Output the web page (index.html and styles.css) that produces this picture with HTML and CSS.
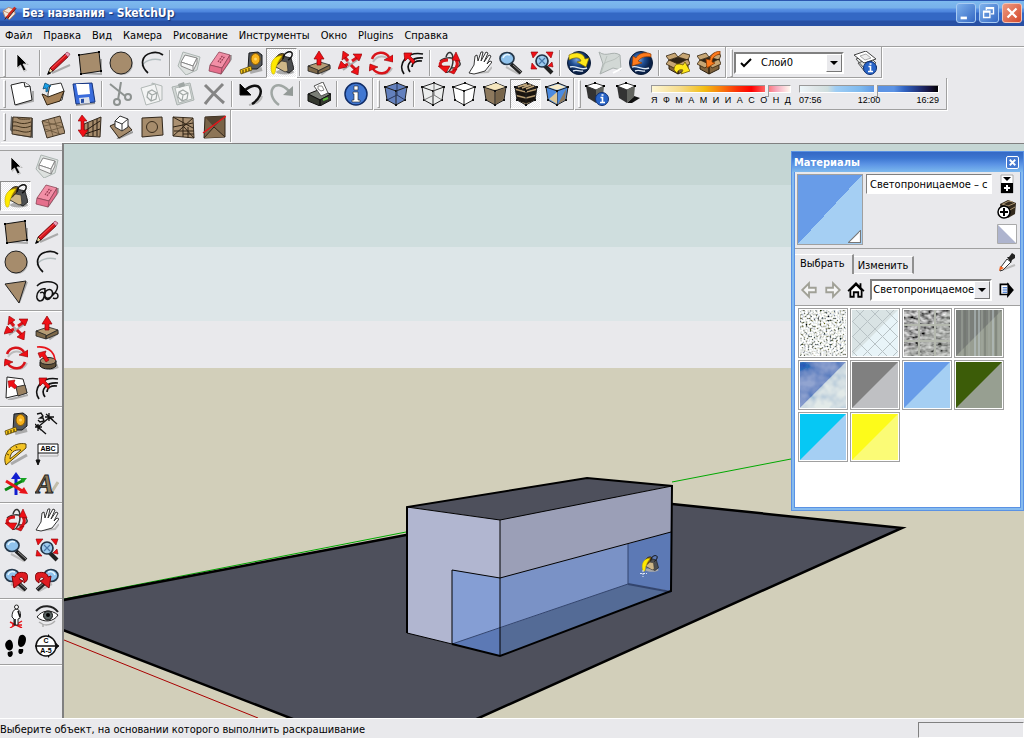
FILE: index.html
```html
<!DOCTYPE html>
<html lang="ru">
<head>
    <meta charset="UTF-8">
    <meta name="viewport" content="width=device-width, initial-scale=1.0">
    <title>Без названия - SketchUp</title>
    <link rel="stylesheet" href="styles.css">
</head>
<body>

    <!-- Icon set -->
    <svg class="sprite" aria-hidden="true">
        <defs>
            <radialGradient id="globeFill" cx="40%" cy="35%"><stop offset="0" stop-color="#7fa6d8"/><stop offset=".5" stop-color="#1f4e94"/><stop offset="1" stop-color="#0a2148"/></radialGradient>
            <pattern id="wood" width="24" height="6" patternUnits="userSpaceOnUse"><rect width="24" height="6" fill="#19140f"/><path d="M0 1l12 3L24 1" stroke="#b59b70" stroke-width="1.600" fill="none"/></pattern>
            <filter id="granite" x="0" y="0" width="1" height="1"><feTurbulence type="fractalNoise" baseFrequency=".5" numOctaves="2" seed="4"/><feColorMatrix values="3 .3 0 0 -.85  3 .2 0 0 -.78  3 0 .3 0 -.85  0 0 0 0 1"/></filter>
            <filter id="clouds" x="0" y="0" width="1" height="1"><feTurbulence type="fractalNoise" baseFrequency=".06" numOctaves="3" seed="9"/><feColorMatrix values="2.4 0 0 0 -.7  1.9 0 0 0 -.35  1 0 0 0 .3  0 0 0 0 1"/></filter>
            <filter id="stone" x="0" y="0" width="1" height="1"><feTurbulence type="fractalNoise" baseFrequency=".18 .3" numOctaves="2" seed="2"/><feColorMatrix values="1.3 0 0 0 -.28  1.3 0 0 0 -.28  1.3 0 0 0 -.28  0 0 0 0 1"/></filter>
        </defs>

        <symbol id="select" viewBox="0 0 24 24"><path d="M8 4v14l3-3 3 6 3-1.500-3-5.500h5z" fill="#bbb"/><path d="M7 3v14l3.500-3 3 6 2.500-1.200-3-5.800h4z" fill="#000" stroke="#fff" stroke-width=".7"/></symbol>
        <symbol id="pencil" viewBox="0 0 24 24"><path d="M5 22l18-8" stroke="#aaa" stroke-width="2"/><path d="M1 23l2-6 3 3z" fill="#f0d49a" stroke="#222" stroke-width=".8"/><path d="M3 17L18 3l3 3L6 20z" fill="#d4141c" stroke="#5a0508" stroke-width=".8"/><path d="M4.500 17.500L19 4" stroke="#ff5050" stroke-width="1"/><path d="M18 3l2-2 3 2-2 3z" fill="#f09ab4" stroke="#8c3c54" stroke-width=".7"/><path d="M0 24l1.500-4L4 22.500z"/></symbol>
        <symbol id="square" viewBox="0 0 24 24"><path d="M5 22l18 1V8" stroke="#aaa" stroke-width="2" fill="none"/><path d="M1 4l20-3 2 19-20 3z" fill="#a68c6c" stroke="#111" stroke-width="1"/><path d="M0 3h2v2H0zM20 0h2v2h-2zM22 19h2v2h-2zM2 22h2v2H2z"/></symbol>
        <symbol id="circle" viewBox="0 0 24 24"><circle cx="13" cy="13" r="11" fill="#b5b5b5"/><circle cx="12" cy="12" r="11" fill="#a68c6c" stroke="#222"/></symbol>
        <symbol id="arc" viewBox="0 0 24 24"><path d="M2 15C4 10 12 7 21 9" stroke="#b4bec0" stroke-width="1.500" fill="none"/><path d="M8 22C-1 14 2 4 11 2c4-1 8-1 12 2" stroke="#111" stroke-width="1.700" fill="none"/></symbol>
        <symbol id="polygon" viewBox="0 0 24 24"><path d="M23 2l-8 21" stroke="#aaa" stroke-width="2"/><path d="M1 4l21-3-7 22z" fill="#a68c6c" stroke="#222"/></symbol>
        <symbol id="freehand" viewBox="0 0 24 24"><path d="M2 6C6 1 18 0 22 5c2 4-2 8-5 11-4 4-8 2-7-2 0-4 5-6 7-3 2 4-3 10-6 8-2-2-1-7-1-11M10 9C5 8 1 13 2 18c1 4 6 4 7-1 1-4-1-6-4-4M17 14c3-2 6-1 6 2s-3 3-5 2" stroke="#111" stroke-width="1.500" fill="none"/></symbol>
        <symbol id="component" viewBox="0 0 24 24"><path d="M6 1L23 6l-3 13-11 5L1 15z" fill="#dde1df" stroke="#acb5b2"/><path d="M8 4l12 3-4 8-12-4z" fill="#fff" stroke="#888"/><path d="M4 11v4l12 5v-5zM16 15l4-8v5l-4 8" fill="#f6f6f6" stroke="#888"/></symbol>
        <symbol id="eraser" viewBox="0 0 24 24"><path d="M12 23l11-16v-3" stroke="#aaa" stroke-width="3" fill="none"/><path d="M11 1l11 3-8 13-12-3z" fill="#f28fa6" stroke="#8c4456" stroke-width=".8"/><path d="M2 14l12 3-1 6L1 20zM14 17l8-13v6l-9 13" fill="#e56f8c" stroke="#8c4456" stroke-width=".8"/><path d="M10 11l5-7M12 12l5-7" stroke="#973c52" stroke-width="1.200" stroke-dasharray="2 .8"/></symbol>
        <symbol id="tape" viewBox="0 0 24 24"><path d="M11 21l12-3" stroke="#aaa" stroke-width="4"/><path d="M10 2l9-1 4 3v10l-5 4H9z" fill="#55585c" stroke="#17191b"/><ellipse cx="16.500" cy="8" rx="4.500" ry="5.500" fill="#f7b21c" stroke="#8a5a00"/><circle cx="16.500" cy="8" r="1.500" fill="#ffd76a"/><path d="M12 15L1 19l1 4 11-4z" fill="#f5c417" stroke="#59450b" stroke-width=".8"/><path d="M4 19v3M7 18v3M10 17v3" stroke="#332800"/></symbol>
        <symbol id="bucket" viewBox="0 0 24 24"><ellipse cx="15" cy="21" rx="9" ry="2.500" fill="#aaa"/><path d="M9 4l12 3 3 11-5 4-13-6z" fill="#4c4e50" stroke="#111" stroke-width=".8"/><path d="M7 9l10 2 1 9-3 1-9-5z" fill="#cdb687" stroke="#333" stroke-width=".8"/><path d="M4 13C4 6 10 1 14 3c2 2-2 7-7 11z" fill="#8a6512" stroke="#222"/><path d="M12 5C5 4 1 10 1 16c0 4 1 8 3 7s1-6 3-9c1-4 3-6 5-9z" fill="#ffe900" stroke="#b8a400" stroke-width=".6"/><path d="M13 8c0-6 7-9 9-6 1 3-2 6-4 7" stroke="#111" stroke-width="1.400" fill="none"/></symbol>
        <symbol id="pushpull" viewBox="0 0 24 24"><path d="M14 23l10-7" stroke="#aaa" stroke-width="3"/><path d="M1 15l12-4 10 3-12 6z" fill="#b59c75" stroke="#222" stroke-width=".8"/><path d="M1 15v5l10 3v-4zM11 20v3l12-5v-4z" fill="#7d6849" stroke="#222" stroke-width=".8"/><path d="M10 14V8H7l5-8 5 8h-3v6z" fill="#f01016" stroke="#8c0004" stroke-width=".7"/></symbol>
        <symbol id="move" viewBox="0 0 24 24"><path d="M6 7l14 15M22 7L5 19" stroke="#aaa" stroke-width="2"/><path d="M6 5l4 5M13 14l5 5M20 6l-6 4M10 13l-6 3" stroke="#d8141a" stroke-width="3"/><path d="M5 0l6 4-7 5zM24 3l-9 0 6 7zM0 18l3-8 6 6zM20 24l-7-3 8-6z" fill="#f01016" stroke="#8c0004" stroke-width=".6"/></symbol>
        <symbol id="rotate" viewBox="0 0 24 24"><path d="M6 24c6 1 14-1 17-7M4 11c4-7 12-7 16-2" stroke="#bbb" stroke-width="2" fill="none"/><path d="M3 8C6 0 16 0 20 6M21 16c-3 8-12 8-17 2" fill="none" stroke="#d8141a" stroke-width="2.500"/><path d="M24 4v7l-9-2zM0 20l1-7 8 3z" fill="#f01016" stroke="#8c0004" stroke-width=".6"/></symbol>
        <symbol id="offset" viewBox="0 0 24 24"><path d="M4 23C-3 13 7 0 23 3M10 21C5 14 11 6 23 7M12 16c0-4 4-7 10-6" stroke="#111" stroke-width="1.700" fill="none"/><path d="M4 2l8 0-2 3 5 5-2 3-5-6-3 3z" fill="#f01016" stroke="#8c0004" stroke-width=".7"/></symbol>
        <symbol id="orbit" viewBox="0 0 24 24"><path d="M9 6c2-7 7-6 7 3S9 26 8 18M20 8c6 5 3 9-6 9M3 10c4-4 12-4 17-1" fill="none" stroke="#333" stroke-width="1.500"/><path d="M16 20c5-4 5-8 3-11" fill="none" stroke="#d8141a" stroke-width="3"/><path d="M11 9C4 9 1 13 5 16" fill="none" stroke="#d8141a" stroke-width="3"/><path d="M19 1l4 9-8-1zM1 15l12 0-4 7zM12 21l8-3-3 5z" fill="#f01016" stroke="#8c0004" stroke-width=".6"/></symbol>
        <symbol id="pan" viewBox="0 0 24 24"><path d="M7 22l13-1 4-5" stroke="#bbb" stroke-width="2" fill="none"/><path d="M1 22l5-8 1-9 2-1 1 6 3-9 2 0-2 9 5-9 2 1-4 9 5-7 2 1-4 8 3-3 2 1-7 9-7 2-4 1z" fill="#fff" stroke="#222" stroke-width=".9"/></symbol>
        <symbol id="zoom" viewBox="0 0 24 24"><path d="M7 16l13 7" stroke="#bbb" stroke-width="2"/><path d="M12 13l10 9" stroke="#222" stroke-width="4"/><path d="M14 14l8 7" stroke="#8c8c8c"/><ellipse cx="8" cy="7.500" rx="7" ry="6" fill="#8fc2ec" stroke="#26384a" stroke-width="1.700"/><path d="M4 7c1-3 4-4 7-3" stroke="#e5f5ff" fill="none" stroke-width="1.600"/></symbol>
        <symbol id="extents" viewBox="0 0 24 24"><path d="M14 14l8 8" stroke="#222" stroke-width="4"/><circle cx="12" cy="10" r="6" fill="#9ecbed" stroke="#223548" stroke-width="1.700"/><path d="M9 7l6 6M15 7l-6 6" stroke="#4777a8" stroke-width="1.200"/><path d="M1 1l7 0-5 6zM23 1l-7 0 5 6zM1 18l1-6 5 6zM23 16l-1-5-4 4z" fill="#f01016" stroke="#8c0004" stroke-width=".6"/></symbol>
        <symbol id="globe" viewBox="0 0 24 24"><circle cx="12" cy="12" r="11.500" fill="url(#globeFill)" stroke="#0b1c38"/><path d="M3 16c6-2 10 4 17 1M6 20c4-2 8 1 10 0" stroke="#dfeaf5" stroke-width="1.400" fill="none"/></symbol>
        <symbol id="getmap" viewBox="0 0 24 24"><use href="#globe"/><path d="M2 4c7-4 15-2 16 4l4-1-3 9-9-5 4-1c-1-4-6-4-12-1z" fill="#ffe81a" stroke="#856f00" stroke-width=".7"/></symbol>
        <symbol id="sendmap" viewBox="0 0 24 24"><use href="#globe"/><path d="M22 3c-7-3-13 0-15 4L4 5 3 15l10-3-4-2c3-4 8-5 13-4z" fill="#ff7a1c" stroke="#8c3b00" stroke-width=".7"/></symbol>
        <symbol id="terrain" viewBox="0 0 24 24"><path d="M1 1c8 6 13-2 21 3l1 15-8-2-13 6 3-10z" fill="#d2d8d5" stroke="#a9b0ae"/><path d="M4 15C9 8 15 12 22 4M9 5L3 22" stroke="#b4bbb8" stroke-width=".8" fill="none"/><path d="M15 22l9-5" stroke="#fff" stroke-width="2"/></symbol>
        <symbol id="box" viewBox="0 0 24 24"><path d="M3 9l9 4v10l-9-5zM12 13l10-5v10l-10 5z" fill="#80633d" stroke="#2d210f"/><path d="M3 9l9-3 10 2-10 5z" fill="#2f2417"/><path d="M3 9L0 5l9-3 3 4zM12 6l5-4 7 2-2 5zM3 9l-3 4 8 4 4-4zM12 13l3 4 9-4-2-5z" fill="#c7a674" stroke="#332510" stroke-width=".8"/></symbol>
        <symbol id="getbox" viewBox="0 0 24 24"><use href="#box"/><path d="M8 19c0-6 4-7 9-5l2-3 5 9-9 3 2-4c-3-1-5 0-6 3z" fill="#ffe81a" stroke="#746000" stroke-width=".8"/></symbol>
        <symbol id="sendbox" viewBox="0 0 24 24"><use href="#box"/><path d="M23 0c-7 1-10 5-10 9L9 8l1 9 8-5-3-1c0-4 3-7 8-8z" fill="#ff7a1c" stroke="#8c3b00" stroke-width=".8"/></symbol>
        <symbol id="badge" viewBox="0 0 24 24"><circle cx="17" cy="17" r="6.500" fill="#2864c8" stroke="#0d2e70"/><path d="M15.500 15.500h2v5M15 20.500h5M16.500 13h2" stroke="#fff" stroke-width="1.600" fill="none"/></symbol>
        <symbol id="layers" viewBox="0 0 24 24"><path d="M5 12l11-4 8 8-12 5zM3 8l12-4 8 8-12 5z" fill="#dfe3e1" stroke="#555"/><path d="M1 4l12-4 10 8-12 4z" fill="#fff" stroke="#444"/><path d="M7 5l6-2 5 4-6 2z" fill="#eee" stroke="#aaa"/><use href="#badge"/></symbol>

        <symbol id="new" viewBox="0 0 24 24"><path d="M6 23l17-4V9" stroke="#aaa" stroke-width="2" fill="none"/><path d="M1 3l13-3 6 4 2 14L5 23z" fill="#fff" stroke="#222"/><path d="M14 0l1 5 5-1" fill="#eee" stroke="#222"/></symbol>
        <symbol id="open" viewBox="0 0 24 24"><path d="M7 12l2-9 11-2 3 8-2 9-14 4z" fill="#fff" stroke="#333"/><path d="M1 12l3 1 3 2 16-6-4 10-13 4z" fill="#a58259" stroke="#2f2211"/><path d="M5 10V6L2 7l2-6 6 3-3 1v4z" fill="#1aa0e8" stroke="#084c77" stroke-width=".8"/></symbol>
        <symbol id="save" viewBox="0 0 24 24"><path d="M4 23l19-2" stroke="#999" stroke-width="2"/><path d="M1 2l19-1 3 19-19 2z" fill="#3a6cdc" stroke="#16347c"/><path d="M4 2h13l1 10-12 1z" fill="#fff"/><path d="M7 16l10-1 1 6-10 1z" fill="#dfe3ea"/><path d="M9 17l3-.3v4l-3 .3z" fill="#274da2"/></symbol>
        <symbol id="cut" viewBox="0 0 24 24"><path d="M1 2l15 12M12 0L9 18" stroke="#8d9290" stroke-width="2"/><circle cx="8" cy="20" r="3" fill="none" stroke="#8d9290" stroke-width="2"/><circle cx="19" cy="15" r="3" fill="none" stroke="#8d9290" stroke-width="2"/></symbol>
        <symbol id="hex" viewBox="0 0 24 24"><path d="M12 8l5 3-1 6-5 2-4-4 1-5zM8 10l4 3 5-2M12 13l-1 6" fill="none" stroke="#a1a8a6" stroke-width="1.200"/></symbol>
        <symbol id="copy" viewBox="0 0 24 24"><path d="M12 1l10 3v14l-8 2z" fill="#eee" stroke="#b1b8b6"/><path d="M1 6l14-4 5 17-14 4z" fill="#f3f4f4" stroke="#b1b8b6"/><use href="#hex"/></symbol>
        <symbol id="paste" viewBox="0 0 24 24"><path d="M1 5l18-4 4 17L6 23z" fill="#d3d8d6" stroke="#acb3b1"/><path d="M4 6l14-3 3 14-13 4z" fill="#f5f6f6" stroke="#b1b8b6"/><path d="M7 2l6-2 1 4-6 2z" fill="#9fa6a4"/><use href="#hex"/></symbol>
        <symbol id="delete" viewBox="0 0 24 24"><path d="M3 3c7 7 12 12 19 18M21 2C14 9 9 14 3 22" stroke="#858585" stroke-width="3" fill="none"/></symbol>
        <symbol id="undo" viewBox="0 0 24 24"><path d="M10 23c6-1 12-3 13-9" stroke="#bbb" stroke-width="2" fill="none"/><path d="M13 22C29 12 21-5 5 9" stroke="#111" stroke-width="2.500" fill="none"/><path d="M1 2l0 11 11 0z" stroke="#111"/></symbol>
        <symbol id="redo" viewBox="0 0 24 24"><path d="M9 23C-6 12 4-6 19 9" stroke="#a0a7a4" stroke-width="2.500" fill="none"/><path d="M23 4v10l-10-1z" fill="#939a97"/></symbol>
        <symbol id="print" viewBox="0 0 24 24"><path d="M1 12l10-4 13 4-11 6z" fill="#7a7e76" stroke="#111"/><path d="M1 12v7l12 5v-6zM13 18v6l11-6v-6z" fill="#34382f" stroke="#111"/><path d="M7 4l9-4 5 11-7 3z" fill="#fff" stroke="#555"/><path d="M11 4l4 0 2 4-3 1-3-2z" fill="none" stroke="#888"/><path d="M16 18l5-2" stroke="#56b836" stroke-width="2"/></symbol>
        <symbol id="info" viewBox="0 0 24 24"><circle cx="12" cy="12" r="11" fill="#4278d2" stroke="#102c66" stroke-width="1.500"/><path d="M9 10h5v8h2v2H8v-2h2v-6H9zM10 4h4v4h-4z" fill="#fff" stroke="#222" stroke-width=".6"/></symbol>

        <symbol id="cube" viewBox="0 0 24 24"><path d="M1 5L13 1l10 4-2 13-9 5L3 18z" stroke="#222"/><path d="M1 5l11 4 11-4M12 9v14" fill="none" stroke="#222"/><path d="M0 4h2v2H0zM12 0h2v2h-2zM22 4h2v2h-2zM11 8h2v2h-2zM2 17h2v2H2zM20 17h2v2h-2zM11 22h2v2h-2z" fill="#111"/></symbol>
        <symbol id="xray" viewBox="0 0 24 24"><use href="#cube" fill="#6380be"/><path d="M13 1v12M3 18l10-5 8 5" stroke="#27365c" fill="none"/></symbol>
        <symbol id="wire" viewBox="0 0 24 24"><use href="#cube" fill="#eceeee"/><path d="M13 1v12M3 18l10-5 8 5" stroke="#777" fill="none"/></symbol>
        <symbol id="hidden" viewBox="0 0 24 24"><use href="#cube" fill="#fff"/></symbol>
        <symbol id="shaded" viewBox="0 0 24 24"><use href="#cube" fill="#8d795d"/><path d="M2 5l11-4 9 4-10 3z" fill="#f5e6be"/><path d="M13 10l9-4-2 11-7 5z" fill="#77654b"/></symbol>
        <symbol id="textured" viewBox="0 0 24 24"><use href="#cube" fill="url(#wood)"/><path d="M4 5l9-3M8 6l9-3M12 7l8-3" fill="none" stroke="#c0a77d" stroke-width="1.400"/></symbol>
        <symbol id="mono" viewBox="0 0 24 24"><use href="#cube" fill="#4c8be0"/><path d="M4 17l8-7v12z" fill="#ddc796"/><path d="M13 22l8-15-1 11z" fill="#8d795d"/><path d="M3 5l10-3 8 3-9 3z" fill="#f6ebc8"/></symbol>
        <symbol id="darkcube" viewBox="0 0 24 24"><path d="M1 4l9-3 9 3-8 4z" fill="#fff" stroke="#333"/><path d="M1 4l10 4v13L3 16z" fill="#333"/><path d="M11 8l8-4-1 11-7 6z" fill="#62645f"/><path d="M0 3h2v2H0zM18 3h2v2h-2zM9 0h2v2H9z"/></symbol>
        <symbol id="shadowset" viewBox="0 0 24 24"><use href="#darkcube"/><use href="#badge"/></symbol>
        <symbol id="shadow" viewBox="0 0 24 24"><path d="M11 21l7-7 6 2-8 5z" fill="#111"/><use href="#darkcube"/></symbol>

        <symbol id="contours" viewBox="0 0 24 24"><path d="M1 1l4 3 18-1v20l-18-3-5-5z" fill="#666"/><path d="M3 2l19 1-1 19-19-3z" fill="#a68c6c" stroke="#3b3022"/><path d="M3 7c5-1 7 4 18 0M3 11c6-1 9 4 18 0M3 15c7 0 11 4 18 1M7 2c1 3 7 2 13 2" stroke="#44341f" fill="none"/></symbol>
        <symbol id="scratch" viewBox="0 0 24 24"><path d="M1 6l18-5 5 17-18 5z" fill="#aa9071" stroke="#3b3022"/><path d="M7 4l5 17M13 3l5 16M3 11l18-4M4 17l18-5M1 6l21 6M4 14l15 5" stroke="#66533a" stroke-width=".8"/></symbol>
        <symbol id="smoove" viewBox="0 0 24 24"><path d="M6 9L23 2l-1 20-16-1z" fill="#a68c6c" stroke="#30261a"/><path d="M7 16L22 6M10 21V8M15 21V6M19 21V4M7 19l15-5" stroke="#271d13"/><path d="M4 0l5 6H6v9l4 0-5 7-5-7h3V6H0z" fill="#f01016" stroke="#8c0004" stroke-width=".6"/></symbol>
        <symbol id="stamp" viewBox="0 0 24 24"><path d="M8 24l16-7" stroke="#999" stroke-width="2"/><path d="M1 11l13-6 9 10-13 8z" fill="#a68c6c" stroke="#30261a"/><path d="M6 6l5-5 8 3v8l-6 4-7-4z" fill="#fff" stroke="#333"/><path d="M6 6l7 3 6-5M13 9v7" stroke="#333" fill="none"/></symbol>
        <symbol id="drape" viewBox="0 0 24 24"><path d="M2 3l20-1 1 18-21 2z" fill="#a68c6c" stroke="#30261a"/><circle cx="12" cy="12" r="5.500" fill="none" stroke="#3a2d1d"/></symbol>
        <symbol id="detail" viewBox="0 0 24 24"><path d="M2 2l20 1 1 20-21-2z" fill="#aa9071" stroke="#3b3022"/><path d="M2 2l20 11M22 3L2 21M2 12l20-4M12 2v20M3 16h20M17 23V12M13 12l10 11M12 19h11" stroke="#2e2315"/></symbol>
        <symbol id="flip" viewBox="0 0 24 24"><path d="M3 2l20-1v21L2 23z" fill="#796348" stroke="#30261a"/><path d="M3 2l9 10 11-11z" fill="#544331"/><path d="M2 23l10-11 11 10" fill="#8d7557" stroke="#30261a"/><path d="M1 18L24 1" stroke="#e8141a" stroke-width="1.500"/></symbol>

        <symbol id="followme" viewBox="0 0 24 24"><path d="M14 23l9-3" stroke="#aaa" stroke-width="4"/><path d="M5 16v4c3 4 13 4 16 0v-5z" fill="#5f4f37" stroke="#111"/><ellipse cx="13" cy="15" rx="8" ry="3.500" fill="#a68c6c" stroke="#222"/><path d="M2 1c10-1 17 4 18 13" stroke="#e8141a" stroke-width="1.600" fill="none"/><path d="M3 7l8-2-1 3 4 6-3 2-4-6-2 2z" fill="#f01016" stroke="#8c0004" stroke-width=".6"/></symbol>
        <symbol id="scale" viewBox="0 0 24 24"><path d="M4 24l20-5" stroke="#aaa" stroke-width="2"/><path d="M3 1l16 2 4 14-21 5z" fill="#fff" stroke="#222"/><path d="M12 11l9-2 2 8-9 3z" fill="#9b8262" stroke="#333"/><path d="M4 5l7-1-1 3 3 3-2 3-4-3-2 2z" fill="#f01016" stroke="#8c0004" stroke-width=".5"/></symbol>
        <symbol id="dimension" viewBox="0 0 24 24"><path d="M3 15L15 5M14 5l8 7M3 15l8 7M14 1v8M10 5h9M3 12v7M0 15h7M11 2l7 6M0 12l6 6" stroke="#111" stroke-width="1.300"/><path d="M2 2l4-1 2 3-3 2 3 0 1 3-4 1-2-2" fill="none" stroke="#111" stroke-width="1.400"/></symbol>
        <symbol id="protractor" viewBox="0 0 24 24"><path d="M7 22l16-9" stroke="#aaa" stroke-width="3"/><path d="M2 23C-3 12 9-1 22 2l0 4zM6 17l11-9C10 7 6 11 6 17z" fill="#f4c424" fill-rule="evenodd" stroke="#5b450a"/><path d="M3 12l2 1M6 7l2 2M12 4l1 2" stroke="#5b450a"/></symbol>
        <symbol id="axes" viewBox="0 0 24 24"><path d="M12 23V6" stroke="#111ed0" stroke-width="3"/><path d="M7 7l5-7 5 7z" fill="#111ed0"/><path d="M1 18L20 8" stroke="#0a8412" stroke-width="3"/><path d="M23 6l-7 0 3 5z" fill="#16a321"/><path d="M2 9l18 11" stroke="#e8141a" stroke-width="3"/><path d="M24 22l-9-1 5-6z" fill="#e8141a"/></symbol>
        <symbol id="previous" viewBox="0 0 24 24"><use href="#zoom"/><path d="M22 5c-7-2-11 1-11 4L8 8l2 12 9-7-4-2c2-3 5-2 5 4 4-2 5-7 2-10z" fill="#df1b21" stroke="#7c0508"/></symbol>
        <symbol id="next" viewBox="0 0 24 24"><use href="#zoom" transform="translate(24 0) scale(-1 1)"/><path d="M2 5c7-2 11 1 11 4l3-1-2 12-9-7 4-2c-2-3-5-2-5 4-4-2-5-7-2-10z" fill="#df1b21" stroke="#7c0508"/></symbol>
        <symbol id="camera" viewBox="0 0 24 24"><path d="M6 18l12 6M18 17L6 24M8 21h10" stroke="#e8141a" stroke-width="1.400"/><path d="M12 5c5 1 5 5 4 9l-2 1v6h-4v-6l-2-2c0-4 1-7 4-8z" fill="#fff" stroke="#222"/><circle cx="12.500" cy="3" r="2" fill="#fff" stroke="#222"/><path d="M14 7l2 6M11 15v6" stroke="#111" stroke-width="1.600"/></symbol>
        <symbol id="look" viewBox="0 0 24 24"><path d="M1 7c6-7 17-6 22 1" stroke="#222" stroke-width="2" fill="none"/><path d="M2 13c5-7 14-8 21-2-4 7-15 8-21 2z" fill="#fff" stroke="#222"/><circle cx="13" cy="11.500" r="4.500" fill="#5a6463" stroke="#111"/><circle cx="13" cy="11" r="2"/><path d="M4 18c5 4 11 4 16-1M8 20v3" stroke="#adadad" stroke-width="1.500" fill="none"/></symbol>
        <symbol id="walk" viewBox="0 0 24 24"><path d="M3 7c3-3 6 0 6 5s-5 6-7 2 0-6 1-7zM4 18l4-1c2 3 0 6-2 6s-3-3-2-5zM15 3c2-4 7-2 7 2s-2 8-5 8-4-4-2-10zM15 15l4 0c1 3-1 5-2 5-3 0-3-3-2-5z"/></symbol>
    </svg>

    <!-- Title bar -->
    <header class="titlebar">
        <svg class="app-icon" viewBox="0 0 16 16"><path d="M1 6l6-4 6 2 1 5-6 6-5-3z" fill="#f2e8dc" stroke="#b98468"/><path d="M2 6l5 2 6-3M7 8v6" stroke="#c4906c" fill="none"/><path d="M5 13L14 2" stroke="#d4281e" stroke-width="2.500"/><path d="M6 14L15 3M3 15l2-3" stroke="#411"/></svg>
        <h1>Без названия - SketchUp</h1>
        <div class="window-buttons">
            <button aria-label="Свернуть"><svg viewBox="0 0 20 20"><path d="M4 14h7v3H4z" fill="#fff"/></svg></button>
            <button aria-label="Восстановить"><svg viewBox="0 0 20 20"><path d="M7 7V4h8v7h-3M7 5h8" fill="none" stroke="#fff" stroke-width="1.500"/><path d="M4 8h7v7H4zM4 9h7" fill="none" stroke="#fff" stroke-width="1.500"/></svg></button>
            <button class="close" aria-label="Закрыть"><svg viewBox="0 0 20 20"><path d="M5 5l10 10M15 5L5 15" stroke="#fff" stroke-width="2.500"/></svg></button>
        </div>
    </header>

    <!-- Menu -->
    <nav class="menu">
        <a href="#">Файл</a>
        <a href="#">Правка</a>
        <a href="#">Вид</a>
        <a href="#">Камера</a>
        <a href="#">Рисование</a>
        <a href="#">Инструменты</a>
        <a href="#">Окно</a>
        <a href="#">Plugins</a>
        <a href="#">Справка</a>
    </nav>

    <!-- Toolbars -->
    <div class="toolbars">
        <div class="toolbar-row first">
            <div class="toolbar">
                <button aria-label="Выбор"><svg><use href="#select"/></svg></button>
                <i class="sep"></i>
                <button aria-label="Линия"><svg><use href="#pencil"/></svg></button>
                <button aria-label="Прямоугольник"><svg><use href="#square"/></svg></button>
                <button aria-label="Окружность"><svg><use href="#circle"/></svg></button>
                <button aria-label="Дуга"><svg><use href="#arc"/></svg></button>
                <i class="sep"></i>
                <button aria-label="Создать компонент"><svg><use href="#component"/></svg></button>
                <button aria-label="Ластик"><svg><use href="#eraser"/></svg></button>
                <button aria-label="Рулетка"><svg><use href="#tape"/></svg></button>
                <button class="active" aria-label="Заливка"><svg><use href="#bucket"/></svg></button>
                <i class="sep"></i>
                <button aria-label="Вдавить/вытянуть"><svg><use href="#pushpull"/></svg></button>
                <button aria-label="Переместить"><svg><use href="#move"/></svg></button>
                <button aria-label="Повернуть"><svg><use href="#rotate"/></svg></button>
                <button aria-label="Смещение"><svg><use href="#offset"/></svg></button>
                <i class="sep"></i>
                <button aria-label="Орбита"><svg><use href="#orbit"/></svg></button>
                <button aria-label="Панорама"><svg><use href="#pan"/></svg></button>
                <button aria-label="Масштаб"><svg><use href="#zoom"/></svg></button>
                <button aria-label="В размер окна"><svg><use href="#extents"/></svg></button>
                <i class="sep"></i>
                <button aria-label="Получить вид"><svg><use href="#getmap"/></svg></button>
                <button aria-label="Рельеф"><svg><use href="#terrain"/></svg></button>
                <button aria-label="Поместить модель"><svg><use href="#sendmap"/></svg></button>
                <i class="sep"></i>
                <button aria-label="Получить модели"><svg><use href="#getbox"/></svg></button>
                <button aria-label="Отправить модель"><svg><use href="#sendbox"/></svg></button>
            </div>
            <div class="toolbar">
                <div class="combo layer">
                    <svg class="check" viewBox="0 0 12 10"><path d="M1 5l3 3 7-7" fill="none" stroke="#000" stroke-width="2"/></svg>
                    <select aria-label="Слой"><option>Слой0</option></select>
                </div>
                <button aria-label="Менеджер слоев"><svg><use href="#layers"/></svg></button>
            </div>
        </div>

        <div class="toolbar-row">
            <div class="toolbar">
                <button aria-label="Создать"><svg><use href="#new"/></svg></button>
                <button aria-label="Открыть"><svg><use href="#open"/></svg></button>
                <button aria-label="Сохранить"><svg><use href="#save"/></svg></button>
                <i class="sep"></i>
                <button aria-label="Вырезать"><svg><use href="#cut"/></svg></button>
                <button aria-label="Копировать"><svg><use href="#copy"/></svg></button>
                <button aria-label="Вставить"><svg><use href="#paste"/></svg></button>
                <button aria-label="Удалить"><svg><use href="#delete"/></svg></button>
                <i class="sep"></i>
                <button aria-label="Отменить"><svg><use href="#undo"/></svg></button>
                <button aria-label="Повторить"><svg><use href="#redo"/></svg></button>
                <i class="sep"></i>
                <button aria-label="Печать"><svg><use href="#print"/></svg></button>
                <i class="sep"></i>
                <button aria-label="Информация о модели"><svg><use href="#info"/></svg></button>
            </div>
            <div class="toolbar">
                <button aria-label="Рентген"><svg><use href="#xray"/></svg></button>
                <i class="sep"></i>
                <button aria-label="Каркас"><svg><use href="#wire"/></svg></button>
                <button aria-label="Скрытые линии"><svg><use href="#hidden"/></svg></button>
                <button aria-label="Закраска"><svg><use href="#shaded"/></svg></button>
                <button class="active" aria-label="Текстуры"><svg><use href="#textured"/></svg></button>
                <button aria-label="Монохромный"><svg><use href="#mono"/></svg></button>
            </div>
            <div class="toolbar shadows">
                <button aria-label="Настройки теней"><svg><use href="#shadowset"/></svg></button>
                <button aria-label="Показать тени"><svg><use href="#shadow"/></svg></button>
                <div class="slider">
                    <input class="months" type="range" min="1" max="365" value="309" aria-label="Месяц">
                    <div class="marks"><span>Я</span><span>Ф</span><span>М</span><span>А</span><span>М</span><span>И</span><span>И</span><span>А</span><span>С</span><span>О</span><span>Н</span><span>Д</span></div>
                </div>
                <div class="slider">
                    <input class="hours" type="range" min="476" max="989" value="761" aria-label="Время">
                    <div class="marks"><span>07:56</span><span>12:00</span><span>16:29</span></div>
                </div>
            </div>
        </div>

        <div class="toolbar-row">
            <div class="toolbar">
                <button aria-label="Из контуров"><svg><use href="#contours"/></svg></button>
                <button aria-label="С нуля"><svg><use href="#scratch"/></svg></button>
                <i class="sep"></i>
                <button aria-label="Рельеф вручную"><svg><use href="#smoove"/></svg></button>
                <button aria-label="Штамп"><svg><use href="#stamp"/></svg></button>
                <button aria-label="Драпировка"><svg><use href="#drape"/></svg></button>
                <button aria-label="Добавить детали"><svg><use href="#detail"/></svg></button>
                <button aria-label="Перевернуть ребро"><svg><use href="#flip"/></svg></button>
            </div>
        </div>
    </div>

    <main class="workspace">
        <!-- Large tool set -->
        <aside class="palette">
            <div class="tools">
                <button aria-label="Выбор"><svg><use href="#select"/></svg></button>
                <button aria-label="Создать компонент"><svg><use href="#component"/></svg></button>
                <button class="active" aria-label="Заливка"><svg><use href="#bucket"/></svg></button>
                <button aria-label="Ластик"><svg><use href="#eraser"/></svg></button>
            </div>
            <div class="tools">
                <button aria-label="Прямоугольник"><svg><use href="#square"/></svg></button>
                <button aria-label="Линия"><svg><use href="#pencil"/></svg></button>
                <button aria-label="Окружность"><svg><use href="#circle"/></svg></button>
                <button aria-label="Дуга"><svg><use href="#arc"/></svg></button>
                <button aria-label="Многоугольник"><svg><use href="#polygon"/></svg></button>
                <button aria-label="От руки"><svg><use href="#freehand"/></svg></button>
            </div>
            <div class="tools">
                <button aria-label="Переместить"><svg><use href="#move"/></svg></button>
                <button aria-label="Вдавить/вытянуть"><svg><use href="#pushpull"/></svg></button>
                <button aria-label="Повернуть"><svg><use href="#rotate"/></svg></button>
                <button aria-label="Ведение"><svg><use href="#followme"/></svg></button>
                <button aria-label="Масштабировать"><svg><use href="#scale"/></svg></button>
                <button aria-label="Смещение"><svg><use href="#offset"/></svg></button>
            </div>
            <div class="tools">
                <button aria-label="Рулетка"><svg><use href="#tape"/></svg></button>
                <button aria-label="Размеры"><svg><use href="#dimension"/></svg></button>
                <button aria-label="Транспортир"><svg><use href="#protractor"/></svg></button>
                <button aria-label="Текст">
                    <svg viewBox="0 0 24 24"><path d="M5 14h18v-9" stroke="#aaa" fill="none"/><path d="M3 2h20v9H3z" fill="#fff" stroke="#111"/><text x="13" y="9" font-size="7" text-anchor="middle">ABC</text><path d="M3 11v11M1 18l2 5 2-5z" fill="#111" stroke="#111"/></svg>
                </button>
                <button aria-label="Оси"><svg><use href="#axes"/></svg></button>
                <button aria-label="Объемный текст">
                    <svg viewBox="0 0 24 24"><path d="M16 21l7-11" stroke="#c2bda9" stroke-width="3"/><text class="serif" x="1" y="21" font-size="27" fill="#8b7758" stroke="#222" stroke-width="1">A</text></svg>
                </button>
            </div>
            <div class="tools">
                <button aria-label="Орбита"><svg><use href="#orbit"/></svg></button>
                <button aria-label="Панорама"><svg><use href="#pan"/></svg></button>
                <button aria-label="Масштаб"><svg><use href="#zoom"/></svg></button>
                <button aria-label="В размер окна"><svg><use href="#extents"/></svg></button>
                <button aria-label="Назад"><svg><use href="#previous"/></svg></button>
                <button aria-label="Вперед"><svg><use href="#next"/></svg></button>
            </div>
            <div class="tools">
                <button aria-label="Позиция камеры"><svg><use href="#camera"/></svg></button>
                <button aria-label="Осмотреться"><svg><use href="#look"/></svg></button>
                <button aria-label="Прогулка"><svg><use href="#walk"/></svg></button>
                <button aria-label="Сечение">
                    <svg viewBox="0 0 24 24"><path d="M13 0l11 12-11 12z"/><circle cx="11" cy="12" r="10" fill="#fff" stroke="#111" stroke-width="1.500"/><path d="M0 12h24" stroke="#111" stroke-width="1.500"/><text x="11" y="9" font-size="7" text-anchor="middle">C</text><text x="11" y="19" font-size="7" text-anchor="middle">A-5</text></svg>
                </button>
            </div>
        </aside>

        <!-- Model view -->
        <section class="viewport">
            <svg class="scene" viewBox="64 144 960 574" preserveAspectRatio="xMidYMid slice">
                <path d="M64 144h960v41H64z" fill="#c5d6d4"/>
                <path d="M64 185h960v62H64z" fill="#cfdede"/>
                <path d="M64 247h960v74H64z" fill="#dde6e8"/>
                <path d="M64 321h960v47H64z" fill="#e9e9ec"/>
                <path d="M64 368h960v350H64z" fill="#d2cfba"/>
                <path d="M64 599l342-67M672 482l352-68" stroke="#00a800"/>
                <path d="M64 640l194 78" stroke="#a80000"/>
                <path d="M58 601l348-66 200-38 66 7 230 24-430 193H298L58 628z" fill="#4e505c" stroke="#000" stroke-width="2.500"/>
                <!-- building -->
                <path d="M407 507l180-29 85 8-172 34z" fill="#4e505c"/>
                <path d="M407 507l93 13v136l-93-23z" fill="#b1b6d0"/>
                <path d="M500 520l172-34-1 105-171 65z" fill="#9b9fb7"/>
                <path d="M452 570l48 8v78l-48-12z" fill="#859ed4"/>
                <path d="M452 644l48-16v28z" fill="#5c79b5"/>
                <path d="M500 578l128-34v40l-128 44z" fill="#7a92c6"/>
                <path d="M628 544l43-12v59l-43-7z" fill="#5c79b5"/>
                <path d="M500 628l128-44 43 8-171 64z" fill="#546b96"/>
                <path d="M452 644l176-60v-40" fill="none" stroke="#33456e"/>
                <path d="M628 584l43 8" stroke="#33456e" stroke-width="2"/>
                <path d="M407 507l93 13 172-34M500 520v136M452 644v-74l48 8 171-46M407 633l45 11" fill="none" stroke="#000"/>
                <path d="M407 633V507l180-29 85 8-1 105-171 65-48-12" fill="none" stroke="#000" stroke-width="2"/>
                <use href="#bucket" x="641" y="555" width="18" height="17"/>
                <path d="M643 570v7M640 573.500h7" stroke="#dfe6f5" stroke-dasharray="2 1"/>
            </svg>

            <!-- Materials window -->
            <div class="materials">
                <div class="materials-title">
                    <h2>Материалы</h2>
                    <button aria-label="Закрыть"><svg viewBox="0 0 12 12"><path d="M3 3l6 6M9 3L3 9" stroke="#fff" stroke-width="2"/></svg></button>
                </div>
                <div class="current">
                    <div class="preview"><svg viewBox="0 0 12 12"><path d="M11.500.5v11H.5z" fill="#fff" stroke="#777"/></svg></div>
                    <input type="text" value="Светопроницаемое – с" aria-label="Название материала">
                    <div class="side">
                        <button aria-label="Дополнительная панель"><svg viewBox="0 0 20 20"><path d="M4 1h12v18H4z" fill="#fff" stroke="#aaa"/><path d="M6 3h8l-4 4zM4 9h12v10H4z"/><path d="M10 11v6M7 14h6" stroke="#fff" stroke-width="2"/></svg></button>
                        <button aria-label="Создать материал"><svg viewBox="0 0 20 20"><path d="M3 5l8-4 8 3-1 11-7 4-7-4z" fill="#33291c"/><path d="M5 5l6 2 7-3M5 9l6 3 7-4M6 5l6-3 4 1" stroke="#aa9470" fill="none"/><circle cx="7" cy="13" r="6" fill="#fff" stroke="#000" stroke-width="1.500"/><path d="M7 9v8M3 13h8" stroke="#000" stroke-width="2"/></svg></button>
                        <button aria-label="Материал по умолчанию"><svg viewBox="0 0 20 20"><path d="M.5.5h19v19H.5z" fill="#fff" stroke="#aaa"/><path d="M1 1v18h18z" fill="#aeb4ce"/></svg></button>
                    </div>
                </div>
                <div class="tabs">
                    <button class="tab selected">Выбрать</button>
                    <button class="tab">Изменить</button>
                    <button class="dropper" aria-label="Пипетка"><svg viewBox="0 0 20 20"><path d="M5 18l13-5" stroke="#bbb" stroke-width="2"/><path d="M10 7l4 3-8 8-3 1 1-4z" fill="#fff" stroke="#333"/><path d="M2 19l1-5 4 2z" fill="#f26522"/><path d="M10 5l2 0 3-4 3 2 0 3-3 2-1 3z" fill="#222"/></svg></button>
                </div>
                <div class="browse">
                    <button aria-label="Назад"><svg viewBox="0 0 16 16"><path d="M2 8l6-6v4h6v4H8v4z" fill="#f5f5f5" stroke="#a0a096" stroke-width="1.600"/></svg></button>
                    <button aria-label="Вперед"><svg viewBox="0 0 16 16"><path d="M14 8L8 2v4H2v4h6v4z" fill="#f5f5f5" stroke="#a0a096" stroke-width="1.600"/></svg></button>
                    <button aria-label="В модели"><svg viewBox="0 0 16 16"><path d="M3 8v6h3v-4h4v4h3V8L8 3z" fill="#fff" stroke="#000" stroke-width="1.600"/><path d="M1 9l7-7 7 7M12 2v4" fill="none" stroke="#000" stroke-width="1.600"/></svg></button>
                    <div class="combo">
                        <select aria-label="Коллекция"><option>Светопроницаемое</option></select>
                    </div>
                    <button class="details" aria-label="Подробнее"><svg viewBox="0 0 16 16"><path d="M9 1l6 7-6 7z"/><path d="M3 3h7v9H3z" fill="#fff" stroke="#000" stroke-width="1.500"/><path d="M5 6h4M5 8h4M5 10h4" stroke="#2864c8"/></svg></button>
                </div>
                <div class="swatches">
                    <button aria-label="Гранит"><svg viewBox="0 0 46 46"><rect width="46" height="46" filter="url(#granite)"/></svg></button>
                    <button aria-label="Сетка"><svg viewBox="0 0 46 46"><path d="M0 0h46v46H0z" fill="#e8f4f8"/><path d="M0 0h46L0 46z" fill="#d9e3e4"/><path d="M0 12L12 0M0 27L27 0M0 42L42 0M11 46l35-35M26 46l20-20M41 46l5-5M34 0l12 12M19 0l27 27M4 0l42 42M0 11l35 35M0 26l20 20M0 41l5 5" stroke="#b8c2c5"/></svg></button>
                    <button aria-label="Стеклоблок"><svg viewBox="0 0 46 46"><rect width="46" height="46" filter="url(#stone)"/><path d="M46 0v46H0z" fill="#b4b8ae" opacity=".3"/><path d="M15 0v46M31 0v46M0 15h46M0 31h46" stroke="#b4b8ae" stroke-width="2"/></svg></button>
                    <button aria-label="Рифленое"><svg viewBox="0 0 46 46"><path d="M0 0h46v46H0z" fill="#989e92"/><path d="M0 0h46L0 46z" fill="#7b7f7b"/><path d="M6 0v46M13 0v46M26 0v46M33 0v46M43 0v46" stroke="#a3aaa0" stroke-width="1"/><path d="M19 0v46M23 0v46M37 0v46" stroke="#c0ccd0"/><path d="M9 0v46M29 0v46M40 0v46" stroke="#70766f"/></svg></button>
                    <button aria-label="Небо"><svg viewBox="0 0 46 46"><rect width="46" height="46" filter="url(#clouds)"/><path d="M0 0h46L0 46z" fill="#4868b0" opacity=".6"/><path d="M46 0v46H0z" fill="#d2dedc" opacity=".65"/></svg></button>
                    <button aria-label="Серый"><svg viewBox="0 0 46 46"><path d="M0 0h46v46H0z" fill="#bfc0c3"/><path d="M0 0h46L0 46z" fill="#808080"/></svg></button>
                    <button aria-label="Синий"><svg viewBox="0 0 46 46"><path d="M0 0h46v46H0z" fill="#a5cff3"/><path d="M0 0h46L0 46z" fill="#689ce8"/></svg></button>
                    <button aria-label="Зеленый"><svg viewBox="0 0 46 46"><path d="M0 0h46v46H0z" fill="#979f91"/><path d="M0 0h46L0 46z" fill="#3c5c08"/></svg></button>
                    <button aria-label="Голубой"><svg viewBox="0 0 46 46"><path d="M0 0h46v46H0z" fill="#a5cff3"/><path d="M0 0h46L0 46z" fill="#06c8f4"/></svg></button>
                    <button aria-label="Желтый"><svg viewBox="0 0 46 46"><path d="M0 0h46v46H0z" fill="#fbfb76"/><path d="M0 0h46L0 46z" fill="#fdfb1a"/></svg></button>
                </div>
            </div>
        </section>
    </main>

    <footer class="statusbar">
        <span>Выберите объект, на основании которого выполнить раскрашивание</span>
        <div class="measure"></div>
    </footer>

</body>
</html>
```
FILE: styles.css
```css
*, *::before, *::after {
    box-sizing: border-box;
}
body {
    margin: 0;
    min-height: 100vh;
    display: flex;
    flex-direction: column;
    background: #e9e9ec;
    color: #000;
    font-family: Tahoma, "DejaVu Sans Condensed", "DejaVu Sans", sans-serif;
    font-size: 11px;
}
button, input, select {
    font: inherit;
    color: inherit;
    margin: 0;
}
button {
    padding: 0;
    border: none;
    background: none;
    display: flex;
    align-items: center;
    justify-content: center;
}
svg text {
    font-family: "Liberation Sans", Arial, sans-serif;
    font-weight: bold;
}
svg .serif {
    font-family: "Liberation Serif", serif;
    font-style: italic;
}
.sprite {
    position: absolute;
    width: 0;
    height: 0;
}
/* Title bar */
.titlebar {
    height: 26px;
    display: flex;
    align-items: center;
    gap: 5px;
    padding: 0 2px;
    background: linear-gradient(#2c56b0 0, #2c56b0 1px, #7db9ee 1px, #76b0ea 8px, #5a92e4 9px, #4c84dc 12px, #3468c4 13px, #3468c4 20px, #2850a4 21px, #2850a4 26px);
}
.app-icon {
    width: 15px;
    height: 16px;
}
.titlebar h1 {
    flex: 1;
    margin: 0;
    color: #fff;
    font-size: 12px;
    text-shadow: 1px 1px 1px #16306c;
}
.window-buttons {
    display: flex;
    gap: 3px;
}
.window-buttons button {
    width: 20px;
    height: 20px;
    border: 1px solid #a9cbf2;
    border-radius: 3px;
    background: linear-gradient(135deg, #7fb2ec, #3468c4);
}
.window-buttons .close {
    border-color: #f2c4b8;
    background: linear-gradient(135deg, #ee9a80, #d4492c);
}
.window-buttons svg {
    width: 18px;
    height: 18px;
}
/* Menu */
.menu {
    height: 20px;
    display: flex;
    align-items: center;
    gap: 11px;
    padding: 0 5px 2px;
}
.menu a {
    color: #000;
    text-decoration: none;
}
/* Toolbars */
.toolbars {
    height: 97px;
}
.toolbar-row {
    height: 32px;
    display: flex;
}
.toolbar-row.first {
    border-top: 1px solid #a0a0a0;
    box-shadow: inset 0 1px #fff;
}
.toolbar {
    display: flex;
    align-items: center;
    padding: 1px 1px 0 3px;
    border-right: 1px solid #a0a0a0;
    border-bottom: 1px solid #a0a0a0;
    box-shadow: 1px 1px #fff;
    margin-right: 1px;
}
.toolbar-row:last-child .toolbar {
    border-bottom: none;
}
.toolbar::before {
    content: "";
    width: 3px;
    height: 28px;
    border: 1px solid;
    border-color: #fff #a0a0a0 #a0a0a0 #fff;
}
.toolbar button, .tools button {
    width: 31px;
    height: 30px;
}
.toolbar button svg, .tools button svg {
    width: 24px;
    height: 24px;
}
.toolbar .active, .tools .active {
    border: 1px solid;
    border-color: #8c8c8c #fff #fff #8c8c8c;
    background: repeating-conic-gradient(#fff 0 25%, #e9e9ec 0 50%) 0 0 / 2px 2px;
}
.sep {
    width: 2px;
    height: 26px;
    margin: 0 2px;
    background: #a0a0a0;
    border-right: 1px solid #fff;
}
/* Drop-downs */
.combo {
    position: relative;
    display: flex;
    align-items: center;
    height: 22px;
    border: 2px solid;
    border-color: #808080 #fff #fff #808080;
    background: #fff;
}
.combo select {
    flex: 1;
    height: 18px;
    padding: 0 16px 0 1px;
    border: none;
    background: transparent;
    appearance: none;
}
.combo::before {
    content: "";
    position: absolute;
    right: 0;
    top: 0;
    width: 16px;
    height: 18px;
    border: 1px solid;
    border-color: #fff #777 #777 #fff;
    background: #e9e9ec;
}
.combo::after {
    content: "";
    position: absolute;
    right: 4px;
    top: 7px;
    border: 4px solid transparent;
    border-top-color: #000;
    border-bottom: none;
}
.layer {
    width: 110px;
    margin: 0 5px 0 1px;
}
.layer .check {
    width: 12px;
    height: 10px;
    margin: 0 8px 0 4px;
}
/* Shadow sliders */
.slider {
    width: 140px;
    margin-left: 8px;
    display: flex;
    flex-direction: column;
}
.slider + .slider {
    margin-right: 6px;
}
.slider input {
    width: 100%;
    height: 12px;
    appearance: none;
    background: none;
}
.slider input::-webkit-slider-runnable-track {
    height: 8px;
    border: 1px solid;
    border-color: #999 #fff #fff #999;
}
.slider input::-webkit-slider-thumb {
    appearance: none;
    width: 4px;
    height: 12px;
    margin-top: -1px;
    background: #f0f0f2;
    border-right: 1px solid #999;
    border-bottom: 1px solid #999;
}
.months::-webkit-slider-runnable-track {
    background: linear-gradient(to right, #fdf6d4, #f6dc8c 20%, #f2bd14 38%, #f97b0c 50%, #fb3008 62%, #f00 72%, #ff6464 82%, #f6a8bc 90%, #fff8f0);
}
.hours::-webkit-slider-runnable-track {
    background: linear-gradient(to right, #ecf6fa, #dfe6e8 10%, #cfdede 20%, #9fcdf4 26%, #7db9ee 44%, #5c93e4 56%, #5c93e4 68%, #3062c0 76%, #22347c 86%, #15123c 94%, #000);
}
.marks {
    display: flex;
    justify-content: space-between;
    font-family: "Liberation Sans", Arial, sans-serif;
    font-size: 9px;
    line-height: 10px;
}
/* Tool palette */
.workspace {
    flex: 1;
    display: flex;
}
.palette {
    width: 63px;
    padding-top: 2px;
    border-right: 1px solid #808080;
}
.palette::before {
    content: "";
    display: block;
    height: 6px;
    border-top: 1px solid #fff;
    border-bottom: 1px solid #a0a0a0;
}
.tools {
    display: grid;
    grid-template-columns: 31px 31px;
    padding-bottom: 3px;
    margin-bottom: 2px;
    border-bottom: 1px solid #a0a0a0;
    box-shadow: 0 1px #fff;
}
/* Model view */
.viewport {
    flex: 1;
    position: relative;
    border-top: 1px solid #808080;
    border-left: 1px solid #808080;
    overflow: hidden;
}
.scene {
    position: absolute;
    width: 100%;
    height: 100%;
}
/* Materials window */
.materials {
    position: absolute;
    top: 7px;
    right: 0;
    width: 233px;
    height: 360px;
    display: flex;
    flex-direction: column;
    border: 1px solid #5a92e4;
    background: #e9e9ec;
    box-shadow: inset 0 0 0 2px #86bbee, inset 0 0 0 3px #5a92e4;
    padding: 0 3px 3px;
}
.materials-title {
    display: flex;
    align-items: center;
    justify-content: space-between;
    height: 20px;
    margin: 0 -3px;
    padding: 0 4px 0 2px;
    background: linear-gradient(#3468c4, #3c76d0 6px, #5a92e4 12px, #7db9ee 20px);
}
.materials-title h2 {
    margin: 0;
    font-size: 11px;
    color: #fff;
}
.materials-title button {
    width: 13px;
    height: 13px;
    border: 1px solid #fff;
    border-radius: 2px;
    background: #4478d0;
}
.current {
    display: flex;
    align-items: flex-start;
    gap: 3px;
    padding: 2px 3px 3px 2px;
    border-bottom: 1px solid #a0a0a0;
}
.preview {
    width: 66px;
    height: 71px;
    display: flex;
    align-items: flex-end;
    justify-content: flex-end;
    border: 1px solid #a0a0a0;
    background: linear-gradient(to bottom right, #689ce8 50%, #a5cff3 50%);
}
.preview svg {
    width: 13px;
    height: 13px;
    margin: 1px;
}
.current input {
    width: 126px;
    height: 20px;
    padding: 0 3px;
    border: 1px solid;
    border-color: #808080 #fff #fff #808080;
    background: #fff;
}
.side {
    flex: 1;
    display: flex;
    flex-direction: column;
    align-items: flex-end;
    gap: 5px;
}
.side svg, .dropper svg {
    width: 20px;
    height: 20px;
}
.tabs {
    display: flex;
    align-items: flex-end;
    height: 25px;
    padding-right: 3px;
}
.tab {
    height: 18px;
    padding: 0 4px;
    border-top: 1px solid #fff;
    border-right: 2px solid #909090;
    border-bottom: 1px solid #fff;
}
.tab.selected {
    height: 20px;
    padding: 0 7px 3px 5px;
    border-bottom: none;
}
.dropper {
    margin-left: auto;
    align-self: center;
}
.browse {
    display: flex;
    align-items: center;
    gap: 4px;
    height: 32px;
    padding: 0 4px;
    border-bottom: 1px solid #a0a0a0;
}
.browse button {
    width: 20px;
}
.browse svg {
    width: 18px;
    height: 18px;
}
.browse .combo {
    flex: 1;
}
.swatches {
    flex: 1;
    display: grid;
    grid-template-columns: repeat(4, 50px);
    grid-auto-rows: 50px;
    gap: 2px;
    padding: 2px 3px;
    background: #fff;
}
.swatches button {
    border: 1px solid #a0a0a0;
    background: #fff;
}
.swatches svg {
    width: 46px;
    height: 46px;
}
/* Status bar */
.statusbar {
    height: 20px;
    display: flex;
    align-items: center;
    justify-content: space-between;
    padding-top: 2px;
    border-top: 1px solid #fff;
}
.measure {
    width: 106px;
    height: 16px;
    align-self: flex-end;
    border: 1px solid;
    border-color: #808080 #fff #fff #808080;
}
```
